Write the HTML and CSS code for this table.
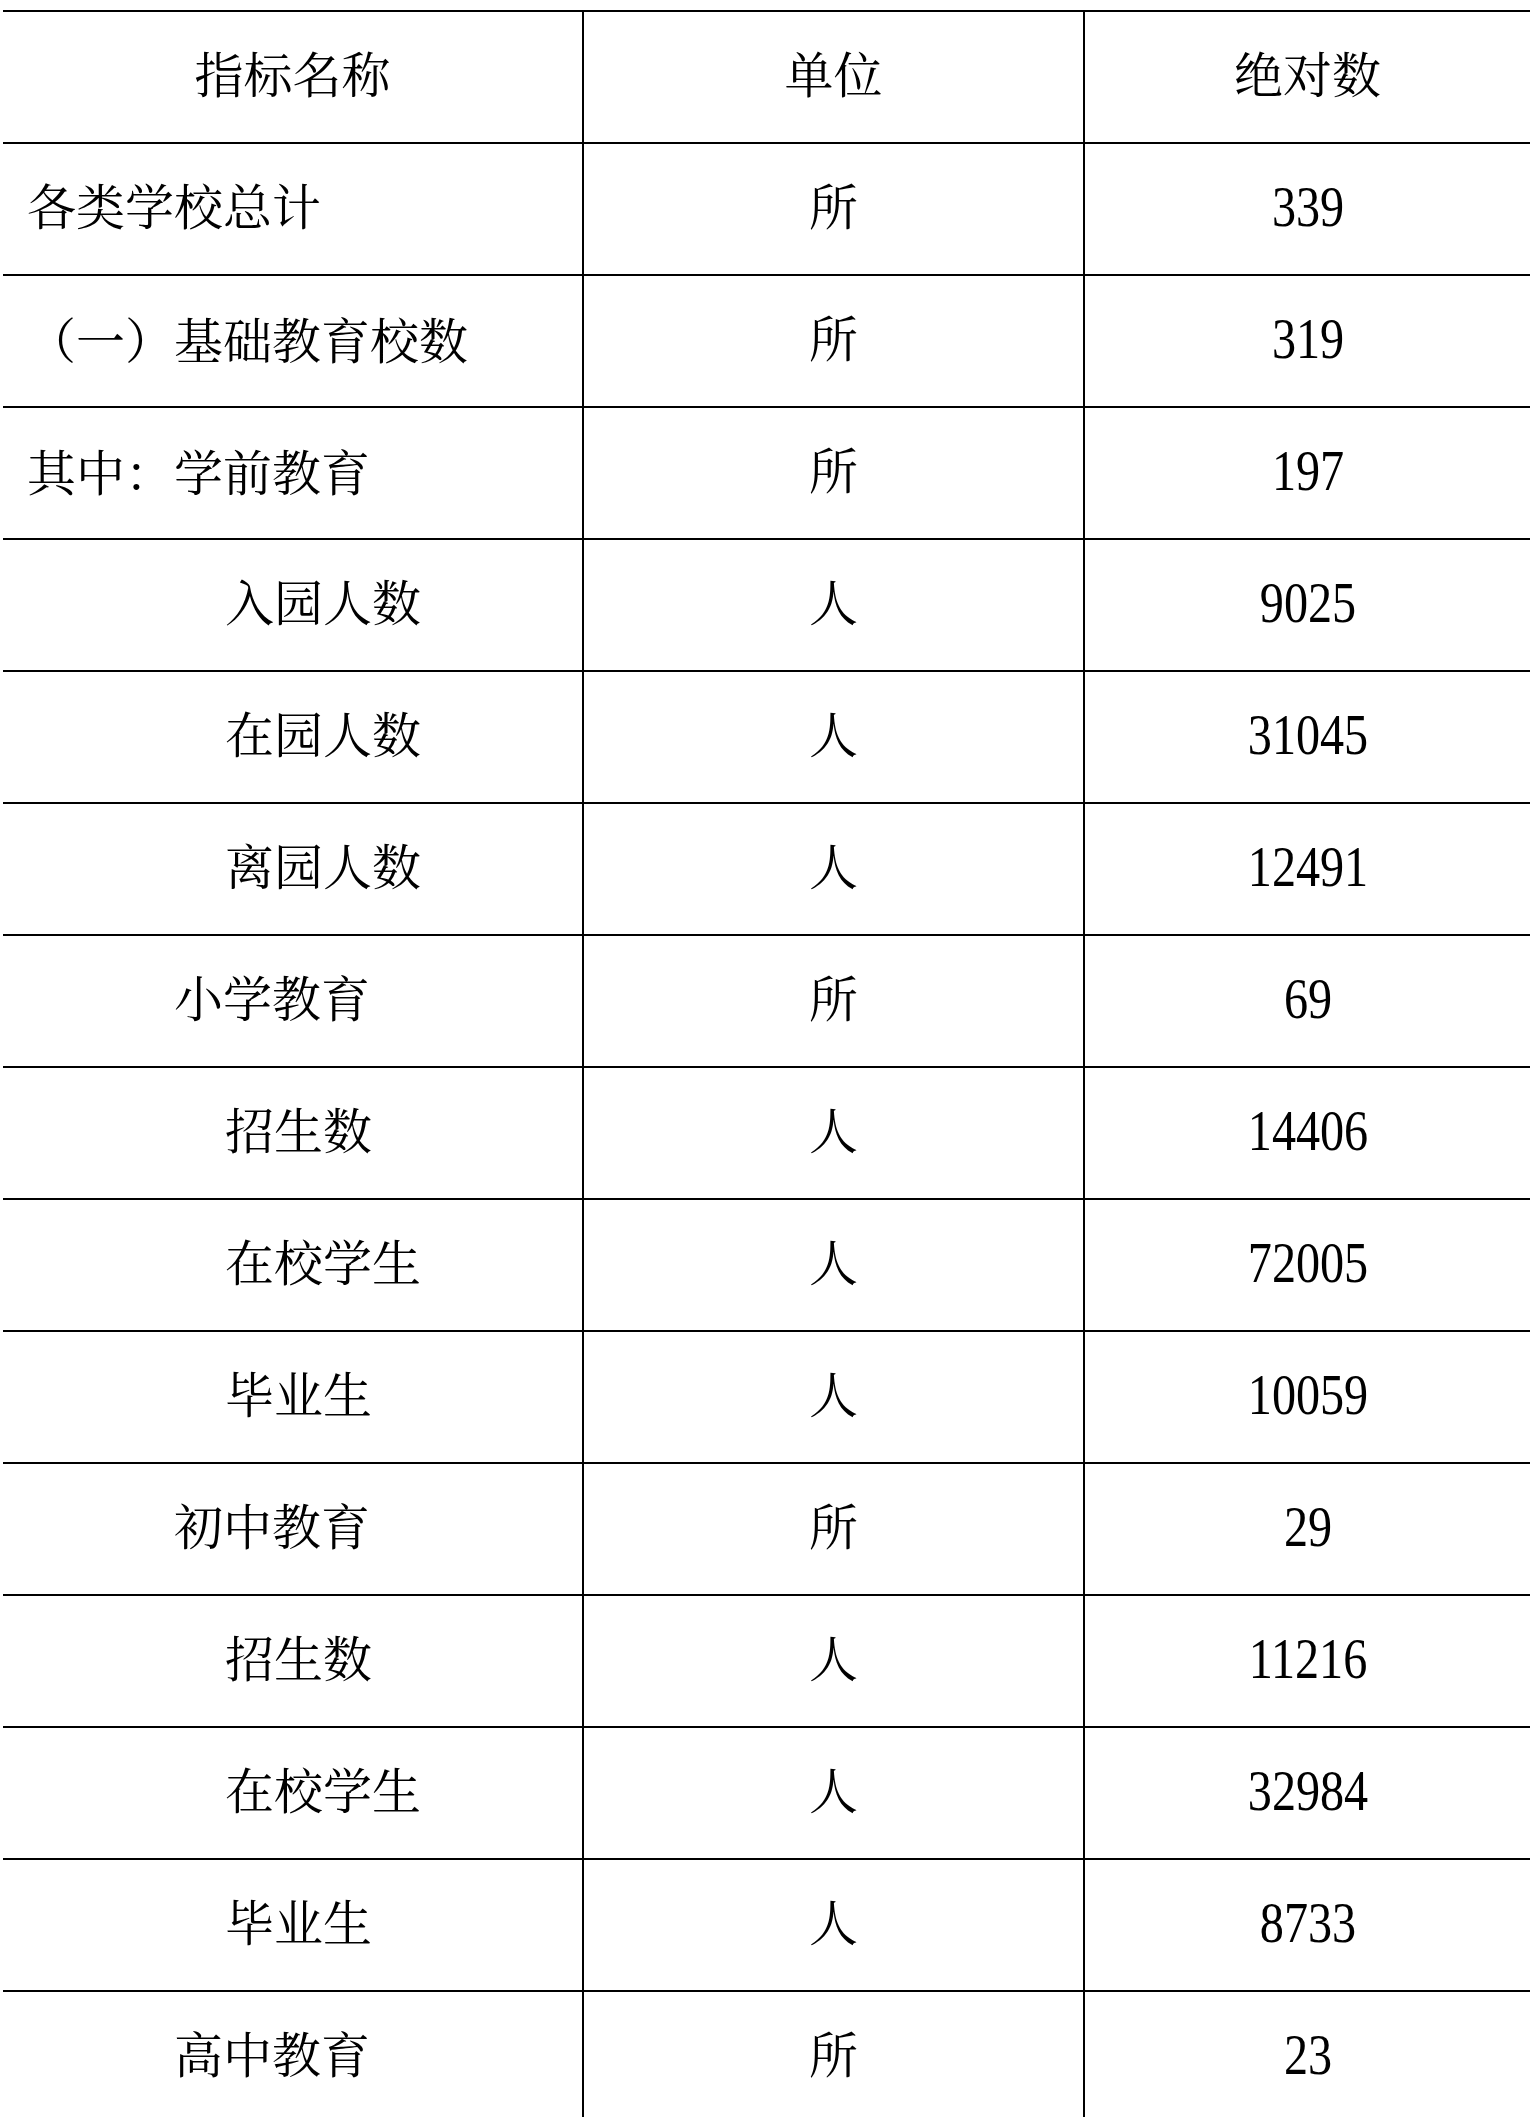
FILE: index.html
```html
<!DOCTYPE html>
<html lang="zh-CN">
<head>
<meta charset="utf-8">
<title>指标</title>
<link rel="stylesheet" href="styles.css">
</head>
<body>
<table class="stats">
  <colgroup>
    <col class="c-name">
    <col class="c-unit">
    <col class="c-val">
  </colgroup>
  <thead>
    <tr>
      <th class="name head">指标名称</th>
      <th class="unit">单位</th>
      <th class="val">绝对数</th>
    </tr>
  </thead>
  <tbody>
    <tr><td class="name">各类学校总计</td><td class="unit">所</td><td class="val"><span class="num">339</span></td></tr>
    <tr><td class="name"><span class="punct">（</span>一<span class="punct">）</span>基础教育校数</td><td class="unit">所</td><td class="val"><span class="num">319</span></td></tr>
    <tr><td class="name">其中<span class="punct">：</span>学前教育</td><td class="unit">所</td><td class="val"><span class="num">197</span></td></tr>
    <tr><td class="name lv3">入园人数</td><td class="unit">人</td><td class="val"><span class="num">9025</span></td></tr>
    <tr><td class="name lv3">在园人数</td><td class="unit">人</td><td class="val"><span class="num">31045</span></td></tr>
    <tr><td class="name lv3">离园人数</td><td class="unit">人</td><td class="val"><span class="num">12491</span></td></tr>
    <tr><td class="name lv2">小学教育</td><td class="unit">所</td><td class="val"><span class="num">69</span></td></tr>
    <tr><td class="name lv3">招生数</td><td class="unit">人</td><td class="val"><span class="num">14406</span></td></tr>
    <tr><td class="name lv3">在校学生</td><td class="unit">人</td><td class="val"><span class="num">72005</span></td></tr>
    <tr><td class="name lv3">毕业生</td><td class="unit">人</td><td class="val"><span class="num">10059</span></td></tr>
    <tr><td class="name lv2">初中教育</td><td class="unit">所</td><td class="val"><span class="num">29</span></td></tr>
    <tr><td class="name lv3">招生数</td><td class="unit">人</td><td class="val"><span class="num">11216</span></td></tr>
    <tr><td class="name lv3">在校学生</td><td class="unit">人</td><td class="val"><span class="num">32984</span></td></tr>
    <tr><td class="name lv3">毕业生</td><td class="unit">人</td><td class="val"><span class="num">8733</span></td></tr>
    <tr><td class="name lv2">高中教育</td><td class="unit">所</td><td class="val"><span class="num">23</span></td></tr>
  </tbody>
</table>
</body>
</html>
```
FILE: styles.css
```css
html, body {
  margin: 0;
  padding: 0;
  background: #fff;
}
body {
  padding: 10px 0 0 3px;
  overflow: hidden;
}
.stats {
  border-collapse: separate;
  border-spacing: 0;
  table-layout: fixed;
  width: 1527px;
  font-family: "Liberation Serif", "Noto Serif CJK SC", "Noto Sans CJK SC", serif;
  font-size: 49px;
  font-weight: normal;
  color: #000;
}
.c-name { width: 579px; }
.c-unit { width: 501px; }
.c-val { width: 447px; }
.stats tr {
  height: 132px;
}
.stats th,
.stats td {
  border-top: 2px solid #000;
  padding: 0;
  vertical-align: middle;
  font-weight: normal;
  line-height: 1.2;
  white-space: nowrap;
}
.stats .name {
  text-align: left;
  padding-left: 24px;
}
.stats .name.head {
  text-align: center;
  padding-left: 0;
}
.stats .name.lv2 {
  padding-left: 171px;
}
.stats .name.lv3 {
  padding-left: 222px;
}
.stats .unit,
.stats .val {
  text-align: center;
  border-left: 2px solid #000;
}
.punct {
  font-family: "Noto Serif CJK TC", "Noto Serif CJK SC", serif;
}
.num {
  display: inline-block;
  font-family: "Liberation Serif", serif;
  font-size: 56px;
  line-height: 1;
  transform: scaleX(0.86);
}
```
